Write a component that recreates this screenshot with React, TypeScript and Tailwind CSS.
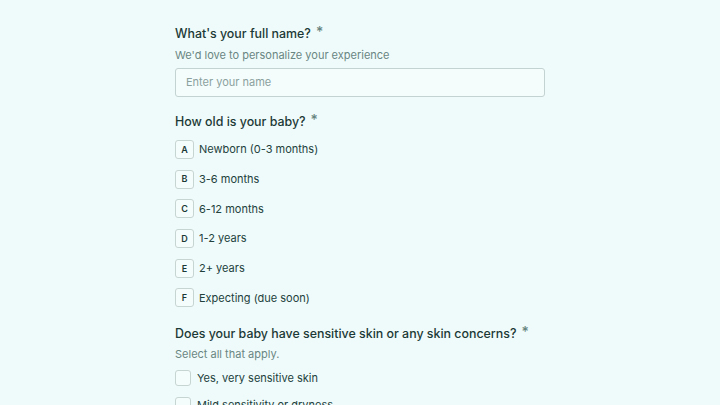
import React from "react";

const ages = [
  ["A", "Newborn (0-3 months)"],
  ["B", "3-6 months"],
  ["C", "6-12 months"],
  ["D", "1-2 years"],
  ["E", "2+ years"],
  ["F", "Expecting (due soon)"],
];

function Title({ children }: { children: React.ReactNode }) {
  return (
    <div className="flex items-start text-[12.4px] leading-[20px] font-medium text-[#1b3936]">
      <span>{children}</span>
      <span className="ml-[5px] mt-[1px] text-[14px] leading-[14px] text-[#668480]">*</span>
    </div>
  );
}

export default function App() {
  return (
    <div
      className="h-[405px] w-full bg-[#effbfa] overflow-hidden"
      style={{ fontFamily: "Inter, 'Noto Sans', sans-serif" }}
    >
      <div className="ml-[175px] w-[370px] pt-[24px]">
        <Title>What's your full name?</Title>
        <div className="mt-[1px] text-[11px] leading-[20px] text-[#6a8683]">
          We'd love to personalize your experience
        </div>
        <div className="mt-[3px] h-[29px] rounded-[3px] border border-[#c3d3d1] bg-[#f4fdfc] flex items-center px-[10px] text-[11px] text-[#8ba19e]">
          Enter your name
        </div>

        <div className="mt-[15px]">
          <Title>How old is your baby?</Title>
        </div>
        <div className="mt-[8px] flex flex-col gap-[10.7px]">
          {ages.map(([k, label]) => (
            <div key={k} className="flex items-center h-[19px]">
              <div className="w-[19px] h-[19px] rounded-[3px] border border-[#c6d4d2] bg-[#f5fdfc] flex items-center justify-center text-[9px] font-semibold text-[#1b3936]">
                {k}
              </div>
              <span className="ml-[5px] text-[11px] text-[#22413d]">{label}</span>
            </div>
          ))}
        </div>

        <div className="mt-[17px]">
          <Title>Does your baby have sensitive skin or any skin concerns?</Title>
        </div>
        <div className="mt-[0px] text-[11px] leading-[20px] text-[#6a8683]">Select all that apply.</div>
        <div className="mt-[6px] flex flex-col gap-[11px]">
          {["Yes, very sensitive skin", "Mild sensitivity or dryness"].map((t) => (
            <div key={t} className="flex items-center h-[16px]">
              <div className="w-[16px] h-[16px] rounded-[3px] border border-[#c6d4d2] bg-[#f5fdfc]" />
              <span className="ml-[6px] text-[11px] text-[#22413d]">{t}</span>
            </div>
          ))}
        </div>
      </div>
    </div>
  );
}
